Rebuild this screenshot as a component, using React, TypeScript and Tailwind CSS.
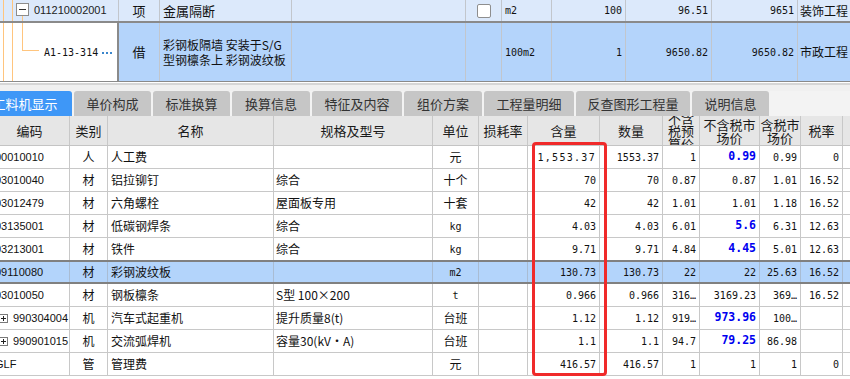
import React from "react";

const MONO = "font-['DejaVu_Sans_Mono','Liberation_Mono',monospace]";
const SANS = "font-['Liberation_Sans','Noto_Sans_CJK_SC',sans-serif]";
const CJK = "font-['Noto_Sans_CJK_SC','Liberation_Sans',sans-serif]";

const W = [
  "w-[80px]",
  "w-[38px]",
  "w-[166px]",
  "w-[159px]",
  "w-[46px]",
  "w-[49px]",
  "w-[72px]",
  "w-[63px]",
  "w-[37px]",
  "w-[60px]",
  "w-[41px]",
  "w-[42px]",
  "w-[40px]",
];

const HEAD = [
  "编码",
  "类别",
  "名称",
  "规格及型号",
  "单位",
  "损耗率",
  "含量",
  "数量",
  "不含税预算价",
  "不含税市场价",
  "含税市场价",
  "税率",
  "",
];

type Row = {
  code: string;
  plus?: boolean;
  type: string;
  name: string;
  spec: string;
  unit: string;
  qty: string;
  num: string;
  budget: string;
  market: string;
  blue?: boolean;
  taxMarket: string;
  rate: string;
  hl?: boolean;
  darkBottom?: boolean;
  wide?: boolean;
};

const ROWS: Row[] = [
  { code: "00010010", type: "人", name: "人工费", spec: "", unit: "元", qty: "1,553.37", wide: true, num: "1553.37", budget: "1", market: "0.99", blue: true, taxMarket: "0.99", rate: "0" },
  { code: "03010040", type: "材", name: "铝拉铆钉", spec: "综合", unit: "十个", qty: "70", num: "70", budget: "0.87", market: "0.87", taxMarket: "1.01", rate: "16.52" },
  { code: "03012479", type: "材", name: "六角螺栓", spec: "屋面板专用", unit: "十套", qty: "42", num: "42", budget: "1.01", market: "1.01", taxMarket: "1.18", rate: "16.52" },
  { code: "03135001", type: "材", name: "低碳钢焊条", spec: "综合", unit: "kg", qty: "4.03", num: "4.03", budget: "6.01", market: "5.6", blue: true, taxMarket: "6.31", rate: "12.63" },
  { code: "03213001", type: "材", name: "铁件", spec: "综合", unit: "kg", qty: "9.71", num: "9.71", budget: "4.84", market: "4.45", blue: true, taxMarket: "5.01", rate: "12.63", darkBottom: true },
  { code: "09110080", type: "材", name: "彩钢波纹板", spec: "", unit: "m2", qty: "130.73", num: "130.73", budget: "22", market: "22", taxMarket: "25.63", rate: "16.52", hl: true },
  { code: "03010050", type: "材", name: "钢板檩条", spec: "S型 100×200", unit: "t", qty: "0.966", num: "0.966", budget: "316…", market: "3169.23", taxMarket: "369…", rate: "16.52" },
  { code: "990304004", plus: true, type: "机", name: "汽车式起重机", spec: "提升质量8(t)", unit: "台班", qty: "1.12", num: "1.12", budget: "919…", market: "973.96", blue: true, taxMarket: "100…", rate: "" },
  { code: "990901015", plus: true, type: "机", name: "交流弧焊机", spec: "容量30(kV·A)", unit: "台班", qty: "1.1", num: "1.1", budget: "94.7", market: "79.25", blue: true, taxMarket: "86.98", rate: "" },
  { code: "GLF", type: "管", name: "管理费", spec: "", unit: "元", qty: "416.57", num: "416.57", budget: "1", market: "1", taxMarket: "1", rate: "0" },
];

const TABS: { label: string; w: string; active?: boolean }[] = [
  { label: "工料机显示", w: "w-[94px]", active: true },
  { label: "单价构成", w: "w-[77px]" },
  { label: "标准换算", w: "w-[77px]" },
  { label: "换算信息", w: "w-[78px]" },
  { label: "特征及内容", w: "w-[90px]" },
  { label: "组价方案", w: "w-[78px]" },
  { label: "工程量明细", w: "w-[90px]" },
  { label: "反查图形工程量", w: "w-[114px]" },
  { label: "说明信息", w: "w-[77px]" },
];

function Orange({ w }: { w: string }) {
  return <div className={`${w} shrink-0 border-l border-[#ffc57e]`} />;
}

function TopRows() {
  const cell = "shrink-0 h-full border-r border-[#c2c6cc] flex items-center overflow-hidden whitespace-nowrap";
  return (
    <div>
      {/* Row 1 */}
      <div className="flex h-[23px] bg-[#dce9fb] border-b-2 border-[#8a8a8a]">
        <div className={`w-[119px] ${cell} items-stretch pl-[3px]`}>
          <Orange w="w-[9px]" />
          <Orange w="w-[4px]" />
          <div className="w-[13px] shrink-0 flex flex-col">
            <div className="mt-[3px] h-[13px] border border-[#8c8c8c] bg-white flex items-center justify-center">
              <div className="w-[7px] h-[1px] bg-[#333]" />
            </div>
            <div className="flex-1 ml-[6px] border-l border-[#ffc57e]" />
          </div>
          <span className={`ml-[5px] self-center text-[11px] text-[#222] ${SANS}`}>011210002001</span>
        </div>
        <div className={`w-[41px] ${cell} justify-center text-[13px]`}>项</div>
        <div className={`w-[132px] ${cell} pl-[3px] text-[13px]`}>金属隔断</div>
        <div className={`w-[174px] ${cell}`} />
        <div className={`w-[36px] ${cell} justify-center`}>
          <div className="w-[14px] h-[14px] rounded-[2px] border border-[#8e8e8e] bg-white" />
        </div>
        <div className={`w-[50px] ${cell} pl-[3px] text-[10px] ${MONO}`}>m2</div>
        <div className={`w-[74px] ${cell} justify-end pr-[3px] text-[10px] ${MONO}`}>100</div>
        <div className={`w-[86px] ${cell} justify-end pr-[3px] text-[10px] ${MONO}`}>96.51</div>
        <div className={`w-[86px] ${cell} justify-end pr-[3px] text-[10px] ${MONO}`}>9651</div>
        <div className="flex-1 h-full flex items-center pl-[2px] text-[12px] whitespace-nowrap overflow-hidden">装饰工程</div>
      </div>
      {/* Row 2 */}
      <div className="flex h-[59px] bg-[#b4d4fb] border-b border-[#8a8a8a]">
        <div className="w-[119px] shrink-0 h-full bg-white border-r-2 border-[#8a8a8a] flex pl-[3px]">
          <Orange w="w-[9px]" />
          <Orange w="w-[10px]" />
          <div className="w-[17px] shrink-0">
            <div className="h-[28px] border-l border-b border-[#ffc57e]" />
          </div>
          <span className={`ml-[5px] self-center text-[10px] text-[#111] ${MONO}`}>A1-13-314</span>
          <div className="ml-[4px] self-center flex gap-[2px] mt-[1px]">
            <div className="w-[2px] h-[2px] bg-[#3a86cc]" />
            <div className="w-[2px] h-[2px] bg-[#3a86cc]" />
            <div className="w-[2px] h-[2px] bg-[#3a86cc]" />
          </div>
        </div>
        <div className={`w-[41px] ${cell} justify-center text-[13px]`}>借</div>
        <div className={`w-[132px] ${cell} pl-[3px] text-[12px] leading-[15px]`}>
          <div>
            彩钢板隔墙 安装于S/G
            <br />
            型钢檩条上 彩钢波纹板
          </div>
        </div>
        <div className={`w-[174px] ${cell}`} />
        <div className={`w-[36px] ${cell}`} />
        <div className={`w-[50px] ${cell} pl-[3px] text-[10px] ${MONO}`}>100m2</div>
        <div className={`w-[74px] ${cell} justify-end pr-[3px] text-[10px] ${MONO}`}>1</div>
        <div className={`w-[86px] ${cell} justify-end pr-[3px] text-[10px] ${MONO}`}>9650.82</div>
        <div className={`w-[86px] ${cell} justify-end pr-[3px] text-[10px] ${MONO}`}>9650.82</div>
        <div className="flex-1 h-full flex items-center pl-[2px] text-[12px] whitespace-nowrap overflow-hidden">市政工程</div>
      </div>
    </div>
  );
}

function Tabs() {
  return (
    <div className="h-[25px] bg-[#f3f3f3] overflow-hidden">
      <div className="flex gap-[2px] ml-[-22px] h-full">
        {TABS.map((t) => (
          <div
            key={t.label}
            className={`${t.w} shrink-0 h-full rounded-t-[3px] flex items-center justify-center text-[13px] whitespace-nowrap ${
              t.active ? "bg-[#3e97f7] text-white" : "bg-[#c6c6c6] text-[#333]"
            }`}
          >
            {t.label}
          </div>
        ))}
      </div>
    </div>
  );
}

function PlusBox() {
  return (
    <svg width="9" height="9" viewBox="0 0 9 9" className="shrink-0">
      <rect x="0.5" y="0.5" width="8" height="8" fill="white" stroke="#7a7a7a" />
      <line x1="2" y1="4.5" x2="7" y2="4.5" stroke="#222" />
      <line x1="4.5" y1="2" x2="4.5" y2="7" stroke="#222" />
    </svg>
  );
}

function Grid() {
  const base = "shrink-0 h-full border-r flex items-center overflow-hidden whitespace-nowrap";
  return (
    <div className="overflow-hidden">
      <div className="ml-[-10px] w-[880px]">
        <div className="flex h-[30px] bg-[#e6e6e6] border-b border-[#c4c4c4]">
          {HEAD.map((h, i) => (
            <div
              key={i}
              className={`${W[i]} shrink-0 h-full border-r border-[#c8c8c8] flex items-center justify-center overflow-hidden text-center text-[13px] leading-[13px] text-[#1a1a1a]`}
            >
              <div>{h}</div>
            </div>
          ))}
        </div>
        {ROWS.map((r, idx) => {
          const rowCls = r.hl
            ? "h-[23px] bg-[#b3d4fb] border-t border-b-2 border-[#808080]"
            : r.darkBottom
            ? "h-[23px] bg-white border-b border-[#808080]"
            : "h-[23px] bg-white border-b border-[#c8c8c8]";
          const bc = r.hl ? "border-[#a9bcd3]" : "border-[#c8c8c8]";
          const numCell = `${base} ${bc} justify-end pr-[3px] text-[10px] ${MONO}`;
          return (
            <div key={idx} className={`flex ${rowCls}`}>
              <div className={`${W[0]} ${base} ${bc} ${r.plus ? "pl-[9px]" : "pl-[5px]"} text-[11px] ${SANS}`}>
                {r.plus && <PlusBox />}
                <span className={r.plus ? "ml-[5px]" : ""}>{r.code}</span>
              </div>
              <div className={`${W[1]} ${base} ${bc} justify-center text-[12px] ${CJK}`}>{r.type}</div>
              <div className={`${W[2]} ${base} ${bc} pl-[3px] text-[12px] ${CJK}`}>{r.name}</div>
              <div className={`${W[3]} ${base} ${bc} pl-[2px] text-[12px] ${CJK}`}>{r.spec}</div>
              <div
                className={`${W[4]} ${base} ${bc} justify-center ${
                  /[a-z0-9]/.test(r.unit) ? `text-[10px] ${MONO}` : `text-[12px] ${CJK}`
                }`}
              >
                {r.unit}
              </div>
              <div className={`${W[5]} ${base} ${bc}`} />
              <div className={`${W[6]} ${numCell} ${r.wide ? "tracking-[1.3px]" : ""}`}>{r.qty}</div>
              <div className={`${W[7]} ${numCell}`}>{r.num}</div>
              <div className={`${W[8]} ${numCell}`}>{r.budget}</div>
              <div
                className={`${W[9]} ${base} ${bc} justify-end pr-[3px] ${MONO} ${
                  r.blue ? "text-[11.5px] font-bold text-[#0000f0]" : "text-[10px]"
                }`}
              >
                {r.market}
              </div>
              <div className={`${W[10]} ${numCell}`}>{r.taxMarket}</div>
              <div className={`${W[11]} ${numCell}`}>{r.rate}</div>
              <div className={`${W[12]} ${base} ${bc}`} />
            </div>
          );
        })}
      </div>
    </div>
  );
}

export default function App() {
  return (
    <div className={`relative w-[850px] h-[379px] overflow-hidden bg-white text-[#111] ${CJK}`}>
      <TopRows />
      <div className="h-[1px] bg-white" />
      <div className="h-[2px] bg-[#d6d6d6]" />
      <div className="h-[6px] bg-[#f0f0f0]" />
      <Tabs />
      <Grid />
      <div className="absolute left-[532px] top-[142px] w-[75px] h-[234px] border-[3px] border-[#f02a2a] rounded-[4px]" />
    </div>
  );
}
